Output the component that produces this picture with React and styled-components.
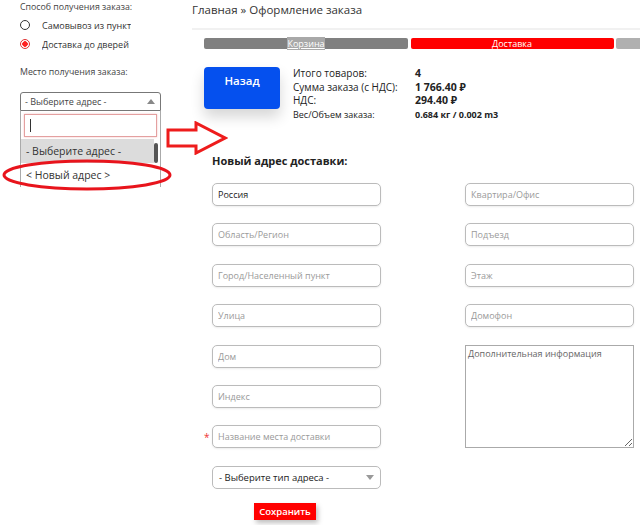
import React from 'react';
import styled, { createGlobalStyle } from 'styled-components';

const Global = createGlobalStyle`
  html, body {
    margin: 0;
    padding: 0;
    background: #fff;
  }
  body {
    font-family: "Open Sans", "Noto Sans", sans-serif;
    color: #333;
  }
  * { box-sizing: border-box; }
`;

const leftFields = [
  { ph: 'Россия', value: 'Россия' },
  { ph: 'Область/Регион' },
  { ph: 'Город/Населенный пункт' },
  { ph: 'Улица' },
  { ph: 'Дом' },
  { ph: 'Индекс' },
  { ph: 'Название места доставки', required: true },
];

const rightFields = ['Квартира/Офис', 'Подъезд', 'Этаж', 'Домофон'];

export default function App() {
  return (
    <Page>
      <Global />
      <Side>
        <SideLabel>Способ получения заказа:</SideLabel>
        <Radio>
          <Dot />
          <RadioText>Самовывоз из пункта</RadioText>
        </Radio>
        <Radio>
          <Dot checked />
          <RadioText>Доставка до дверей</RadioText>
        </Radio>
        <SideLabel style={{ marginTop: 14 }}>Место получения заказа:</SideLabel>
        <Select>
          <span>- Выберите адрес -</span>
          <Caret up />
        </Select>
        <DropPanel>
          <Search>
            <Cursor />
          </Search>
          <Options>
            <Option active>- Выберите адрес -</Option>
            <Option>&lt; Новый адрес &gt;</Option>
            <Scroll />
          </Options>
        </DropPanel>
      </Side>

      <Main>
        <Crumbs>Главная » Оформление заказа</Crumbs>
        <Steps>
          <Step tone="done"><u>Корзина</u></Step>
          <Step tone="current">Доставка</Step>
          <Step tone="next" />
        </Steps>

        <Summary>
          <BackButton>Назад</BackButton>
          <Totals>
            <span>Итого товаров:</span><b>4</b>
            <span>Сумма заказа (с НДС):</span><b>1 766.40 ₽</b>
            <span>НДС:</span><b>294.40 ₽</b>
            <Small>Вес/Объем заказа:</Small><SmallB>0.684 кг / 0.002 m3</SmallB>
          </Totals>
        </Summary>

        <Heading>Новый адрес доставки:</Heading>

        <Form>
          <Column>
            {leftFields.map((f) => (
              <Field key={f.ph}>
                {f.required && <Star>*</Star>}
                <Input placeholder={f.ph} defaultValue={f.value} />
              </Field>
            ))}
            <Field>
              <TypeSelect>
                <span>- Выберите тип адреса -</span>
                <Caret />
              </TypeSelect>
            </Field>
            <SaveRow>
              <Save>Сохранить</Save>
            </SaveRow>
          </Column>
          <Column>
            {rightFields.map((ph) => (
              <Field key={ph}>
                <Input placeholder={ph} />
              </Field>
            ))}
            <Field>
              <Area placeholder="Дополнительная информация" />
            </Field>
          </Column>
        </Form>
      </Main>

      <Arrow viewBox="0 0 62 34" width="62" height="34">
        <path
          d="M2 9 H30 V2 L59 17 L30 32 V25 H2 Z"
          fill="none"
          stroke="#ee1c1c"
          strokeWidth="3"
          strokeLinejoin="miter"
        />
      </Arrow>
      <Ring viewBox="0 0 172 34" width="172" height="34">
        <ellipse cx="86" cy="17" rx="83" ry="14" fill="none" stroke="#e8141c" strokeWidth="3" />
      </Ring>
    </Page>
  );
}

const Page = styled.div`
  position: relative;
  display: flex;
  width: 640px;
  height: 525px;
  overflow: hidden;
`;

const Side = styled.div`
  width: 162px;
  padding: 1px 0 0 20px;
  overflow: hidden;
  flex-shrink: 0;
`;

const SideLabel = styled.div`
  font-size: 8.8px;
  color: #444;
  line-height: 13px;
  white-space: nowrap;
`;

const Radio = styled.div`
  display: flex;
  align-items: center;
  gap: 12px;
  height: 16px;
  margin-top: 3px;
  font-size: 9px;
  color: #333;
  white-space: nowrap;
`;

/* the page clips the long option label */
const RadioText = styled.span`
  width: 89px;
  overflow: hidden;
`;

const Dot = styled.span`
  width: 10px;
  height: 10px;
  border-radius: 50%;
  border: 1.5px solid ${(p) => (p.checked ? '#e03030' : '#333')};
  background: ${(p) => (p.checked ? 'radial-gradient(circle, #f22 0 2.5px, #fff 3px)' : '#fff')};
  flex-shrink: 0;
`;

const Select = styled.div`
  margin-top: 13px;
  width: 141px;
  height: 19px;
  border: 1px solid #777;
  border-radius: 3px 3px 0 0;
  display: flex;
  align-items: center;
  justify-content: space-between;
  padding: 0 5px 0 4px;
  font-size: 9px;
  color: #444;
`;

const Caret = styled.span`
  width: 0;
  height: 0;
  border-left: 4px solid transparent;
  border-right: 4px solid transparent;
  ${(p) => (p.up ? 'border-bottom: 5px solid #888;' : 'border-top: 5px solid #999;')}
`;

const DropPanel = styled.div`
  width: 141px;
  border-left: 1px solid #aaa;
  border-right: 1px solid #aaa;
  padding-top: 3px;
  height: 76px;
`;

const Search = styled.div`
  margin: 0 3px;
  height: 23px;
  border: 1px solid #e4a0a0;
  box-shadow: 0 0 2px #f3c4c4;
  display: flex;
  align-items: center;
  padding-left: 5px;
`;

const Cursor = styled.span`
  width: 1px;
  height: 13px;
  background: #333;
`;

const Options = styled.div`
  position: relative;
  margin-top: 2px;
  padding-right: 6px;
`;

const Option = styled.div`
  height: 24px;
  display: flex;
  align-items: center;
  padding-left: 5px;
  font-size: 10.5px;
  color: #333;
  white-space: nowrap;
  background: ${(p) => (p.active ? '#dcdcdc' : '#fff')};
`;

const Scroll = styled.span`
  position: absolute;
  right: 2px;
  top: 4px;
  width: 4px;
  height: 20px;
  border-radius: 2px;
  background: #555;
`;

const Main = styled.div`
  flex: 1;
  padding-left: 28px;
`;

const Crumbs = styled.div`
  margin-left: 2px;
  height: 30px;
  padding-top: 2px;
  font-size: 11.5px;
  color: #333;
  border-bottom: 2px solid #f1f1f1;
`;

const Steps = styled.div`
  display: grid;
  grid-template-columns: 204px 203px 1fr;
  gap: 2.5px;
  margin: 8px -20px 0 14px;
`;

const toneColor = { done: '#808080', current: '#ff0000', next: '#b0b0b0' };

const Step = styled.div`
  height: 11px;
  border-radius: 2px;
  background: ${(p) => toneColor[p.tone]};
  color: #fff;
  font-size: 9px;
  line-height: 11px;
  text-align: center;
  u { background: #a8a8a8; text-decoration: underline; }
`;

const Summary = styled.div`
  display: flex;
  align-items: flex-start;
  gap: 13px;
  margin: 18px 0 0 14px;
`;

const BackButton = styled.div`
  width: 76px;
  height: 42px;
  border-radius: 4px;
  background: #0550ee;
  color: #fff;
  font-size: 11.5px;
  font-weight: 600;
  display: flex;
  justify-content: center;
  padding-top: 6px;
  box-shadow: 0 8px 14px rgba(0, 0, 0, 0.16);
`;

const Totals = styled.div`
  display: grid;
  grid-template-columns: 122px auto;
  font-size: 10px;
  line-height: 13.5px;
  color: #222;
  b { font-weight: 700; font-size: 10.5px; }
`;

const Small = styled.span`
  font-size: 9px;
`;

const SmallB = styled.b`
  font-size: 9px !important;
`;

const Heading = styled.div`
  margin: 32px 0 0 22px;
  font-size: 11px;
  font-weight: 700;
  color: #222;
`;

const Form = styled.div`
  display: grid;
  grid-template-columns: 169px 169px;
  column-gap: 84px;
  margin: 15px 0 0 22px;
`;

const Column = styled.div`
  display: flex;
  flex-direction: column;
  gap: 17.4px;
`;

const Field = styled.div`
  position: relative;
`;

const Star = styled.span`
  position: absolute;
  left: -8px;
  top: 5px;
  color: #e33;
  font-size: 10px;
`;

const Input = styled.input`
  display: block;
  width: 169px;
  height: 23px;
  border: 1px solid #bbb;
  border-radius: 5px;
  padding: 0 5px;
  font-family: inherit;
  font-size: 9px;
  color: #222;
  box-shadow: 0 1px 2px rgba(0, 0, 0, 0.08);
  &::placeholder { color: #9a9a9a; }
`;

const TypeSelect = styled.div`
  width: 169px;
  height: 23px;
  border: 1px solid #bbb;
  border-radius: 5px;
  display: flex;
  align-items: center;
  justify-content: space-between;
  padding: 0 6px 0 6px;
  font-size: 9.5px;
  color: #222;
`;

const Area = styled.textarea`
  display: block;
  width: 169px;
  height: 103px;
  border: 1px solid #aaa;
  border-radius: 0;
  padding: 1px 2px;
  resize: both;
  font-family: inherit;
  font-size: 9px;
  &::placeholder { color: #666; }
`;

const SaveRow = styled.div`
  display: flex;
  padding-left: 42px;
  margin-top: -3px;
`;

const Save = styled.div`
  width: 62px;
  height: 17px;
  background: #ff0000;
  color: #fff;
  font-size: 9.5px;
  font-weight: 600;
  line-height: 17px;
  text-align: center;
  box-shadow: 2px 3px 5px rgba(0, 0, 0, 0.25);
`;

const Arrow = styled.svg`
  position: absolute;
  left: 166px;
  top: 121px;
`;

const Ring = styled.svg`
  position: absolute;
  left: 1px;
  top: 158px;
`;
